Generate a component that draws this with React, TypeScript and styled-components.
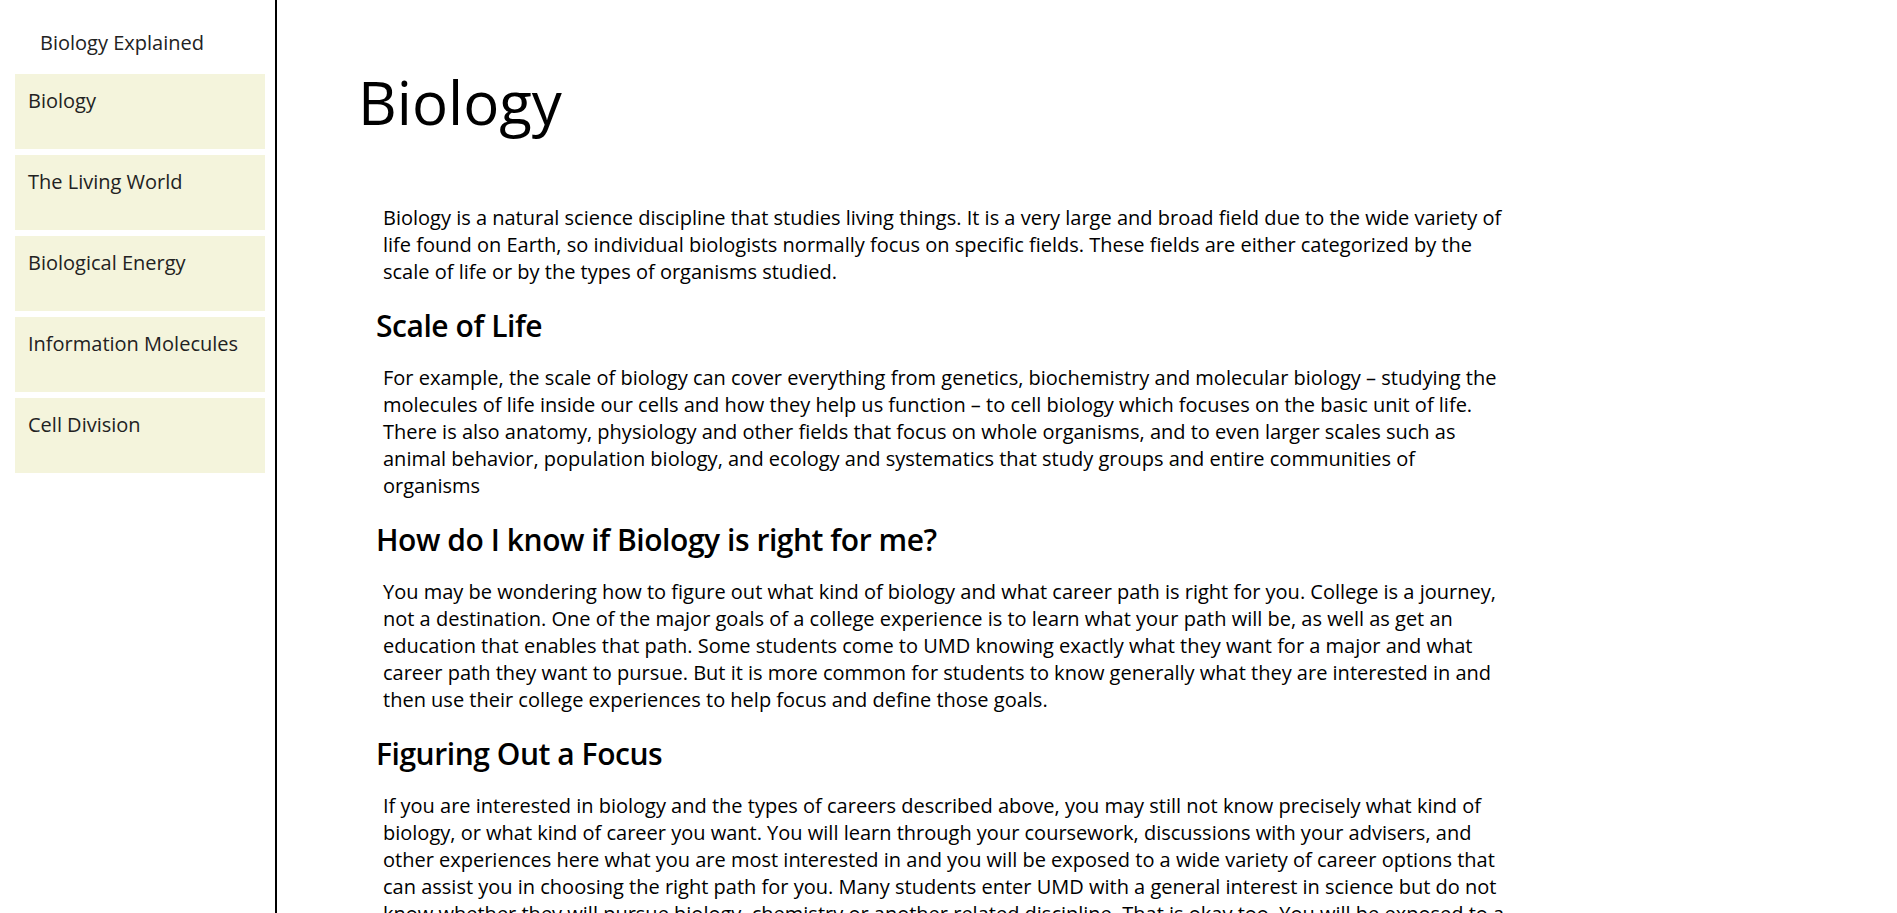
import React from "react";
import styled, { createGlobalStyle } from "styled-components";

const GlobalStyle = createGlobalStyle`
  html, body {
    margin: 0;
    padding: 0;
    background: #ffffff;
  }
  body {
    font-family: "Open Sans", "Noto Sans", sans-serif;
    font-size: 20px;
    color: #000;
  }
  * { box-sizing: border-box; }
`;

const Layout = styled.div`
  display: flex;
  min-height: 100vh;
  align-items: stretch;
`;

const Sidebar = styled.nav`
  flex: 0 0 277px;
  width: 277px;
  border-right: 2px solid #000;
  padding: 0 10px 0 15px;
`;

const Brand = styled.div`
  padding: 29px 0 18px 25px;
  font-size: 20px;
  line-height: 27px;
  color: #222;
`;

const NavList = styled.ul`
  list-style: none;
  margin: 0;
  padding: 0;
  display: flex;
  flex-direction: column;
  gap: 6px;
`;

const NavItem = styled.li`
  height: 75px;
  background: #f4f4dc;
  padding: 13px 13px;
  font-size: 20px;
  line-height: 27px;
  color: #222;
  cursor: pointer;
`;

const Main = styled.main`
  flex: 1;
  padding-left: 81px;
  min-width: 0;
`;

const Title = styled.h1`
  margin: 61px 0 61px;
  font-size: 60px;
  font-weight: 400;
  line-height: normal;
  color: #000;
`;

const Article = styled.article`
  padding-left: 18px;
`;

const SectionHeading = styled.h2`
  margin: 20px 0 18px;
  font-size: 30px;
  font-weight: 600;
  line-height: normal;
  letter-spacing: -0.45px;
  color: #000;
`;

const Paragraph = styled.p`
  margin: 18px 0 18px 7px;
  max-width: 1130px;
  font-size: 20px;
  line-height: normal;
  color: #000;
`;

const navItems = [
  "Biology",
  "The Living World",
  "Biological Energy",
  "Information Molecules",
  "Cell Division",
];

const sections: { heading?: string; text: string }[] = [
  {
    text:
      "Biology is a natural science discipline that studies living things. It is a very large and broad field due to the wide variety of life found on Earth, so individual biologists normally focus on specific fields. These fields are either categorized by the scale of life or by the types of organisms studied.",
  },
  {
    heading: "Scale of Life",
    text:
      "For example, the scale of biology can cover everything from genetics, biochemistry and molecular biology – studying the molecules of life inside our cells and how they help us function – to cell biology which focuses on the basic unit of life. There is also anatomy, physiology and other fields that focus on whole organisms, and to even larger scales such as animal behavior, population biology, and ecology and systematics that study groups and entire communities of organisms",
  },
  {
    heading: "How do I know if Biology is right for me?",
    text:
      "You may be wondering how to figure out what kind of biology and what career path is right for you. College is a journey, not a destination. One of the major goals of a college experience is to learn what your path will be, as well as get an education that enables that path. Some students come to UMD knowing exactly what they want for a major and what career path they want to pursue. But it is more common for students to know generally what they are interested in and then use their college experiences to help focus and define those goals.",
  },
  {
    heading: "Figuring Out a Focus",
    text:
      "If you are interested in biology and the types of careers described above, you may still not know precisely what kind of biology, or what kind of career you want. You will learn through your coursework, discussions with your advisers, and other experiences here what you are most interested in and you will be exposed to a wide variety of career options that can assist you in choosing the right path for you. Many students enter UMD with a general interest in science but do not know whether they will pursue biology, chemistry or another related discipline. That is okay too. You will be exposed to a variety of disciplines in your first years and can decide on a focus as your interests develop.",
  },
];

export default function App() {
  return (
    <>
      <GlobalStyle />
      <Layout>
        <Sidebar>
          <Brand>Biology Explained</Brand>
          <NavList>
            {navItems.map((item) => (
              <NavItem key={item}>{item}</NavItem>
            ))}
          </NavList>
        </Sidebar>
        <Main>
          <Title>Biology</Title>
          <Article>
            {sections.map((s, i) => (
              <React.Fragment key={i}>
                {s.heading && <SectionHeading>{s.heading}</SectionHeading>}
                <Paragraph>{s.text}</Paragraph>
              </React.Fragment>
            ))}
          </Article>
        </Main>
      </Layout>
    </>
  );
}
